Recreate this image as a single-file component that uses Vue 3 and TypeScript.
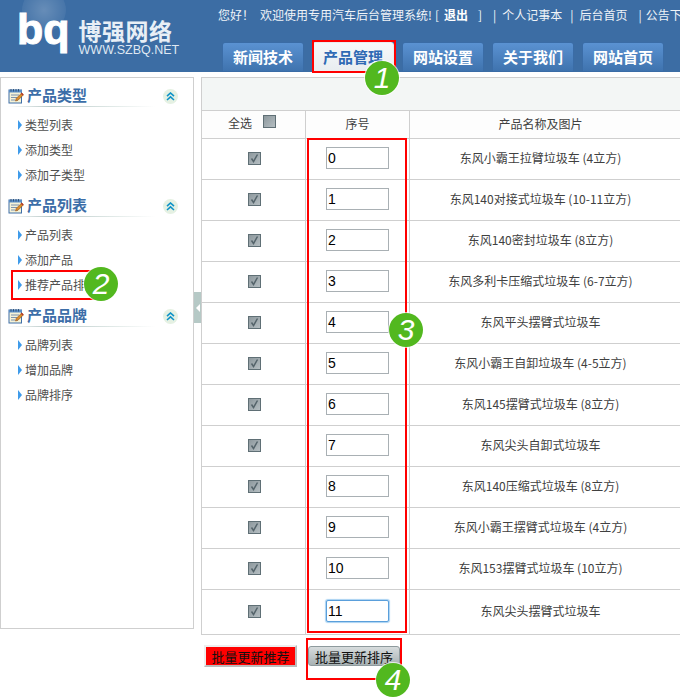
<script setup lang="ts">
const tabs = ['新闻技术', '产品管理', '网站设置', '关于我们', '网站首页']
const groups = [
  { title: '产品类型', items: ['类型列表', '添加类型', '添加子类型'] },
  { title: '产品列表', items: ['产品列表', '添加产品', '推荐产品排序'] },
  { title: '产品品牌', items: ['品牌列表', '增加品牌', '品牌排序'] }
]
const rows = [
  '东风小霸王拉臂垃圾车 (4立方)',
  '东风140对接式垃圾车 (10-11立方)',
  '东风140密封垃圾车 (8立方)',
  '东风多利卡压缩式垃圾车 (6-7立方)',
  '东风平头摆臂式垃圾车',
  '东风小霸王自卸垃圾车 (4-5立方)',
  '东风145摆臂式垃圾车 (8立方)',
  '东风尖头自卸式垃圾车',
  '东风140压缩式垃圾车 (8立方)',
  '东风小霸王摆臂式垃圾车 (4立方)',
  '东风153摆臂式垃圾车 (10立方)',
  '东风尖头摆臂式垃圾车'
]
const badges = [
  { n: '1', cls: 'b1' },
  { n: '2', cls: 'b2' },
  { n: '3', cls: 'b3' },
  { n: '4', cls: 'b4' }
]
</script>

<template>
  <div class="page">
    <header class="header">
      <div class="logo">
        <span class="glow"></span>
        <span class="bq">bq</span>
        <div class="brand">
          <div class="cn">博强网络</div>
          <div class="en">WWW.SZBQ.NET</div>
        </div>
      </div>
      <div class="head-right">
        <div class="topline">
          <span>您好！</span>
          <span class="m6">欢迎使用专用汽车后台管理系统!</span>
          <span class="m3">[</span>
          <b class="m5">退出</b>
          <span class="m10">]</span>
          <span class="m11">|</span>
          <span class="m6">个人记事本</span>
          <span class="m8">|</span>
          <span class="m6">后台首页</span>
          <span class="m11">|</span>
          <span class="m4">公告下载</span>
        </div>
        <nav class="tabs">
          <a v-for="(t, i) in tabs" :key="t" class="tab" :class="{ active: i === 1 }">{{ t }}</a>
        </nav>
      </div>
    </header>

    <div class="body">
      <aside class="side">
        <section v-for="g in groups" :key="g.title" class="group">
          <div class="gtitle">
            <svg class="note" width="16" height="16" viewBox="0 0 16 16">
              <rect x="1" y="2" width="12.500" height="13" fill="#f6f3d8" stroke="#3f6fa8" />
              <path d="M1 2h13v2.500H1z" fill="#5b8fc9" />
              <path d="M3 1v2.500M5.500 1v2.500M8 1v2.500M10.500 1v2.500" stroke="#30577f" />
              <path d="M3 7h8M3 9.500h6M3 12h4" stroke="#7d93ad" />
              <path d="M7.500 13l.7-2.500 5.500-5.500 1.800 1.800-5.500 5.500z" fill="#d98c2b" stroke="#8a4a18" stroke-width=".6" />
              <path d="M12.800 5.800l1-1 1.800 1.800-1 1z" fill="#b8342a" />
            </svg>
            <span class="gname">{{ g.title }}</span>
            <span class="collapse">
              <svg width="9" height="9" viewBox="0 0 9 9" fill="none" stroke="#0f93c8" stroke-width="1.600">
                <path d="M1 4.200L4.500 1 8 4.200M1 8L4.500 4.800 8 8" />
              </svg>
            </span>
          </div>
          <ul class="items">
            <li v-for="it in g.items" :key="it"><i class="arrow"></i><span>{{ it }}</span></li>
          </ul>
        </section>
      </aside>

      <div class="gutter">
        <div class="handle"><i></i></div>
      </div>

      <main class="main">
        <div class="table">
          <div class="bar"></div>
          <div class="row headrow">
            <div class="c1"><span>全选</span><span class="cb empty"></span></div>
            <div class="c2">序号</div>
            <div class="c3">产品名称及图片</div>
          </div>
          <div v-for="(r, i) in rows" :key="r" class="row" :class="{ last: i === 11 }">
            <div class="c1">
              <span class="cb">
                <svg width="11" height="11" viewBox="0 0 11 11" fill="none" stroke="#55646b" stroke-width="1.500">
                  <path d="M2.500 5.500l2 3 4-7" />
                </svg>
              </span>
            </div>
            <div class="c2"><span class="inp" :class="{ focus: i === 11 }">{{ i }}</span></div>
            <div class="c3">{{ r }}</div>
          </div>
        </div>
        <div class="actions">
          <button class="btn red">批量更新推荐</button>
          <button class="btn gray">批量更新排序</button>
        </div>
      </main>
    </div>

    <div class="redbox r1"></div>
    <div class="redbox r2"></div>
    <div class="redbox r3"></div>
    <div class="redbox r4"></div>
    <div v-for="b in badges" :key="b.n" class="badge" :class="b.cls">{{ b.n }}</div>
  </div>
</template>

<style>
html, body { margin: 0; overflow: hidden; background: #fff; }
</style>

<style scoped>
.page {
  position: relative;
  width: 680px;
  height: 697px;
  overflow: hidden;
  background: #fff;
  font: 12px/1 "Noto Sans CJK SC", sans-serif;
  color: #444;
}
.header {
  height: 72px;
  display: flex;
  background: #3c6da4;
  overflow: hidden;
}
.logo {
  position: relative;
  width: 218px;
  flex: none;
  display: flex;
  padding-left: 17px;
  box-sizing: border-box;
}
.glow {
  position: absolute;
  left: 22px;
  top: -12px;
  width: 44px;
  height: 44px;
  border-radius: 50%;
  background: radial-gradient(circle, rgba(255,255,255,.22), rgba(255,255,255,.06) 70%, transparent 72%);
}
.bq {
  position: relative;
  font: bold 43px/1 "Liberation Sans", sans-serif;
  -webkit-text-stroke: 1px #fff;
  color: #fff;
  margin-top: 8px;
  height: 43px;
}
.brand { position: relative; margin: 18px 0 0 9px; color: #fff; }
.cn { font-size: 23px; line-height: 25px; font-weight: 700; letter-spacing: .5px; color: #e8eff6; white-space: nowrap; }
.en { font: 12.500px/13px "Liberation Sans", sans-serif; margin-top: 1px; color: #dfe8f2; white-space: nowrap; }
.head-right { flex: 1; min-width: 0; }
.topline {
  display: flex;
  white-space: nowrap;
  color: #f0f4f8;
  height: 42px;
  line-height: 29px;
}
.topline > * { flex: none; }
.topline b { font-weight: 700; color: #fff; }
.m3 { margin-left: 3px; }
.m4 { margin-left: 4px; }
.m5 { margin-left: 5px; }
.m6 { margin-left: 6px; }
.m8 { margin-left: 8px; }
.m10 { margin-left: 10px; }
.m11 { margin-left: 11px; }
.tabs { display: flex; gap: 8px; padding-left: 4px; }
.tab {
  flex: none;
  width: 82px;
  height: 30px;
  box-sizing: border-box;
  border-radius: 3px 3px 0 0;
  background: linear-gradient(#5a92d2, #3f73ae);
  border: 1px solid #3a6ca6;
  color: #fff;
  font-size: 15px;
  font-weight: 700;
  line-height: 27px;
  text-align: center;
}
.tab.active {
  background: linear-gradient(#f7f8f9, #e8edf0);
  color: #2f6ab4;
  border-color: #e8edf0;
}
.body { display: flex; padding-top: 5px; }
.side {
  width: 194px;
  height: 552px;
  flex: none;
  box-sizing: border-box;
  border: 1px solid #cfcfcf;
  padding-top: 4px;
}
.group { height: 110px; }
.gtitle {
  display: flex;
  align-items: center;
  height: 25px;
  margin: 0 0 0 6px;
  width: 147px;
  padding-left: 1px;
  position: relative;
  background: linear-gradient(to right, #fff, #b5c6c5 30%, #dfe8e6 70%, #fff) left bottom / 100% 1px no-repeat;
}
.note { flex: none; margin-top: 3px; }
.gname {
  margin-left: 3px;
  font-size: 15px;
  font-weight: 700;
  color: #3c6ea8;
}
.collapse {
  position: absolute;
  left: 156px;
  top: 7px;
  width: 15px;
  height: 15px;
  border-radius: 50%;
  background: #e5f1e3;
  display: flex;
  align-items: center;
  justify-content: center;
}
.items { list-style: none; margin: 0; padding: 5px 0 0 17px; }
.items li {
  height: 25px;
  display: flex;
  align-items: center;
  color: #505050;
}
.arrow {
  width: 0;
  height: 0;
  border-left: 4px solid #3f9bea;
  border-top: 5px solid transparent;
  border-bottom: 5px solid transparent;
  margin-right: 3px;
}
.gutter { width: 7px; flex: none; }
.handle {
  width: 7px;
  height: 31px;
  margin-top: 215px;
  background: #b6c9c6;
  display: flex;
  align-items: center;
  justify-content: center;
}
.handle i {
  border-right: 4px solid #fff;
  border-top: 4px solid transparent;
  border-bottom: 4px solid transparent;
}
.main { flex: 1; min-width: 0; }
.table { border-left: 1px solid #cfcfcf; border-top: 1px solid #cfcfcf; border-bottom: 1px solid #cfcfcf; }
.bar { height: 32px; background: #f3f6f5; border-bottom: 1px solid #cfcfcf; }
.row {
  display: grid;
  grid-template-columns: 103px 104px 1fr;
  height: 41px;
  box-sizing: border-box;
  border-bottom: 1px solid #cfcfcf;
}
.row.last { height: 44px; border-bottom: 0; }
.row.headrow { height: 28px; background: #fdfdfd; }
.row > div {
  display: flex;
  align-items: center;
  justify-content: center;
  color: #404040;
  padding-bottom: 2px;
  box-sizing: border-box;
}
.row > .c1 { padding-left: 2px; }
.row > .c2 { border-left: 1px solid #cfcfcf; }
.row > .c3 { border-left: 1px solid #cfcfcf; padding-right: 9px; white-space: nowrap; }
.row.headrow > .c1 { gap: 11px; padding-left: 0; padding-right: 3px; padding-bottom: 4px; }
.cb {
  width: 13px;
  height: 13px;
  box-sizing: border-box;
  border: 1px solid #5f6f75;
  background: linear-gradient(135deg, #8d989d, #b5bec2);
  display: flex;
  align-items: center;
  justify-content: center;
}
.cb.empty { margin-top: -2px; }
.inp {
  width: 63px;
  height: 22px;
  box-sizing: border-box;
  border: 1px solid #a9b0b4;
  background: #fff;
  color: #000;
  font: 14px/20px "Liberation Sans", sans-serif;
  padding-left: 1px;
}
.inp.focus {
  border: 1px solid #5a9fdb;
  box-shadow: 0 0 1px 1px #a9d2f2;
  border-radius: 2px;
}
.actions { display: flex; gap: 11px; padding: 10px 0 0 3px; align-items: flex-start; }
.btn {
  font: 13px/1 "Noto Sans CJK SC", sans-serif;
  color: #111;
  padding: 0;
  box-sizing: border-box;
  cursor: pointer;
  white-space: nowrap;
}
.btn.red {
  width: 93px;
  height: 22px;
  background: #f00;
  border: 2px solid;
  border-color: #eee #bbb #bbb #eee;
}
.btn.gray {
  width: 92px;
  height: 20px;
  margin-top: 1px;
  border-radius: 3px;
  border: 1px solid #8e9a9d;
  background: linear-gradient(#d7dcdd, #a8b2b4);
}
.redbox {
  position: absolute;
  box-sizing: border-box;
  border: 2px solid #f00;
  pointer-events: none;
}
.r1 { left: 312px; top: 40px; width: 84px; height: 33px; }
.r2 { left: 11px; top: 270px; width: 86px; height: 30px; }
.r3 { left: 307px; top: 138px; width: 100px; height: 495px; }
.r4 { left: 306px; top: 638px; width: 96px; height: 42px; }
.badge {
  position: absolute;
  width: 34px;
  height: 34px;
  border-radius: 50%;
  background: #52b81f;
  box-shadow: 0 0 0 1px rgba(255,255,255,.7);
  color: #fff;
  font: italic 30px/34px "Liberation Sans", sans-serif;
  text-align: center;
}
.b1 { left: 365px; top: 61px; }
.b2 { left: 84px; top: 267px; }
.b3 { left: 389px; top: 313px; }
.b4 { left: 376px; top: 663px; }
</style>
